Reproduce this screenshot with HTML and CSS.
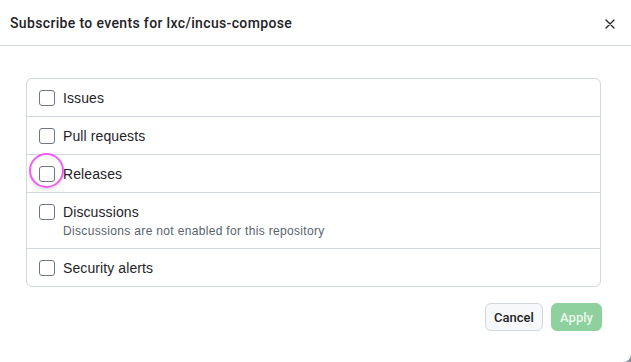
FILE: index.html
```html
<!DOCTYPE html>
<html lang="en">
<head>
<meta charset="utf-8">
<title>Subscribe to events</title>
<link rel="stylesheet" href="styles.css">
</head>
<body>
<div class="dialog">
  <div class="header">
    <h1 class="title">Subscribe to events for lxc/incus-compose</h1>
    <button class="close" aria-label="Close">
      <svg width="16" height="16" viewBox="0 0 16 16"><path d="M4 4 L12 12 M12 4 L4 12" stroke="#1f2328" stroke-width="1.3" stroke-linecap="round" fill="none"/></svg>
    </button>
  </div>
  <div class="body">
    <ul class="list">
      <li class="row"><span class="box"></span><span class="label">Issues</span></li>
      <li class="row"><span class="box"></span><span class="label">Pull requests</span></li>
      <li class="row"><span class="box"></span><span class="label">Releases</span><span class="ring"></span></li>
      <li class="row"><span class="box"></span><div class="col"><span class="label">Discussions</span><span class="note">Discussions are not enabled for this repository</span></div></li>
      <li class="row"><span class="box"></span><span class="label">Security alerts</span></li>
    </ul>
  </div>
  <div class="footer">
    <button class="btn cancel">Cancel</button>
    <button class="btn apply">Apply</button>
  </div>
</div>
</body>
</html>
```
FILE: styles.css
```css
html, body {
  margin: 0;
  padding: 0;
  background: #8c959f;
}
body {
  font-family: "Liberation Sans", Arial, sans-serif;
  color: #1f2328;
  width: 631px;
  height: 362px;
  overflow: hidden;
}
.dialog {
  background: #ffffff;
  width: 631px;
  height: 362px;
  border-bottom-right-radius: 8px;
}
.header {
  height: 46px;
  border-bottom: 1px solid #d0d7de;
  display: flex;
  align-items: center;
  justify-content: space-between;
  padding: 0 13px 0 10px;
  box-sizing: border-box;
}
.title {
  margin: 0;
  font-size: 14px;
  font-weight: 500;
  font-family: Roboto, "Liberation Sans", sans-serif;
  line-height: 20px;
  letter-spacing: 0.35px;
  padding-top: 1px;
}
.close {
  border: 0;
  background: none;
  padding: 0;
  width: 16px;
  height: 16px;
  display: flex;
  margin-top: 2px;
}
.body {
  padding: 32px 30px 0 26px;
}
.list {
  list-style: none;
  margin: 0;
  padding: 0;
  border: 1px solid #d0d7de;
  border-radius: 6px;
}
.row {
  position: relative;
  display: flex;
  align-items: flex-start;
  gap: 8px;
  padding: 9px 12px 8px;
  border-top: 1px solid #d0d7de;
  font-size: 14px;
  line-height: 20px;
}
.row:first-child {
  border-top: 0;
}
.label {
  letter-spacing: 0.1px;
}
.box {
  flex: none;
  width: 14px;
  height: 14px;
  margin-top: 2px;
  border: 1px solid #6e7781;
  border-radius: 3px;
  background: #fff;
}
.col {
  display: flex;
  flex-direction: column;
}
.note {
  font-size: 12px;
  line-height: 18px;
  color: #59636e;
  letter-spacing: 0.33px;
}
.ring {
  position: absolute;
  left: 2px;
  top: -2px;
  width: 35px;
  height: 35px;
  border: 2px solid #f25cf2;
  border-radius: 50%;
  box-sizing: border-box;
  box-shadow: 0 2px 3px rgba(0, 0, 0, 0.12);
}
.footer {
  display: flex;
  justify-content: flex-end;
  gap: 8px;
  padding: 16px 29px 0 0;
}
.btn {
  height: 28px;
  border-radius: 6px;
  font-family: Roboto, "Liberation Sans", sans-serif;
  font-size: 13px;
  font-weight: 500;
  padding: 0;
}
.cancel {
  background: #f6f8fa;
  border: 1px solid #d0d7de;
  color: #1f2328;
  width: 58px;
}
.apply {
  background: #8fd19e;
  border: 1px solid #8fd19e;
  color: rgba(255, 255, 255, 0.85);
  width: 51px;
}
```
